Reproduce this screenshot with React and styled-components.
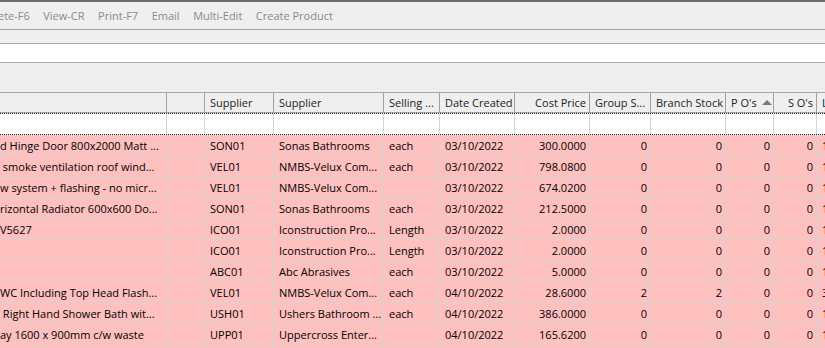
import React from "react";
import styled, { createGlobalStyle } from "styled-components";

const GlobalStyle = createGlobalStyle`
  body {
    margin: 0;
    overflow: hidden;
    font-family: "Open Sans", "Noto Sans", sans-serif;
  }
`;

const Frame = styled.div`
  width: 825px;
  height: 348px;
  overflow: hidden;
  background: #efefef;
  display: flex;
  flex-direction: column;
  font-size: 11px;
`;

const TopEdge = styled.div`
  height: 2px;
  background: #6b6b6b;
  flex: none;
`;

const Toolbar = styled.div`
  height: 27px;
  flex: none;
  display: flex;
  align-items: center;
  gap: 13.5px;
  margin-left: -2px;
  border-bottom: 1px solid #a8a8a8;
  color: #8a8a8a;
  white-space: nowrap;
`;

const ToolItem = styled.span`
  line-height: 16px;
`;

const Strip = styled.div`
  height: ${(p) => p.h}px;
  flex: none;
  background: ${(p) => (p.white ? "#ffffff" : "#efefef")};
  border-bottom: 1px solid #a8a8a8;
`;

const Grid = styled.div`
  flex: 1;
  display: flex;
  flex-direction: column;
  background: #ffffff;
`;

const Row = styled.div`
  display: flex;
  flex: none;
  height: ${(p) => p.h}px;
  background: ${(p) => p.bg};
  border-bottom: 1px ${(p) => p.line};
`;

const FilterRow = styled(Row)`
  border-top: 1px dotted #202020;
`;

const HeadCell = styled.div`
  flex: none;
  width: ${(p) => p.w}px;
  box-sizing: border-box;
  border-right: 1px solid #a0a0a0;
  padding: 0 ${(p) => (p.right ? 3 : 4)}px 0 5px;
  display: flex;
  align-items: center;
  justify-content: ${(p) => (p.right ? "flex-end" : "flex-start")};
  color: #222;
  white-space: nowrap;
  overflow: hidden;
`;

const FilterCell = styled.div`
  flex: none;
  width: ${(p) => p.w}px;
  box-sizing: border-box;
  border-right: 1px solid #d4d4d4;
`;

const Cell = styled.div`
  flex: none;
  width: ${(p) => p.w}px;
  box-sizing: border-box;
  border-right: 1px solid #d6d2d2;
  padding: 0 ${(p) => (p.right ? 3 : 4)}px 0 ${(p) => (p.first ? 0 : 5)}px;
  display: flex;
  align-items: center;
  justify-content: ${(p) => (p.right ? "flex-end" : "flex-start")};
  color: #000;
  white-space: pre;
  overflow: hidden;
`;

const SortArrow = styled.span`
  display: inline-block;
  width: 0;
  height: 0;
  margin-left: 5px;
  border-left: 5px solid transparent;
  border-right: 5px solid transparent;
  border-bottom: 5px solid #7a7a7a;
`;

const columns = [
  { w: 167, title: "" },
  { w: 38, title: "" },
  { w: 69, title: "Supplier" },
  { w: 110, title: "Supplier" },
  { w: 56, title: "Selling ..." },
  { w: 75, title: "Date Created" },
  { w: 75, title: "Cost Price", right: true },
  { w: 61, title: "Group S..." },
  { w: 75, title: "Branch Stock" },
  { w: 48, title: "P O's", sort: true },
  { w: 43, title: "S O's", right: true },
  { w: 40, title: "L" },
];

const numericCols = [6, 7, 8, 9, 10];

const rows = [
  ["d Hinge Door 800x2000 Matt ...", "", "SON01", "Sonas Bathrooms", "each", "03/10/2022", "300.0000", "0", "0", "0", "0", "1"],
  [" smoke ventilation roof wind...", "", "VEL01", "NMBS-Velux Com...", "each", "03/10/2022", "798.0800", "0", "0", "0", "0", "1"],
  ["w system + flashing - no micr...", "", "VEL01", "NMBS-Velux Com...", "", "03/10/2022", "674.0200", "0", "0", "0", "0", "1"],
  ["rizontal Radiator 600x600 Do...", "", "SON01", "Sonas Bathrooms", "each", "03/10/2022", "212.5000", "0", "0", "0", "0", "1"],
  ["V5627", "", "ICO01", "Iconstruction Pro...", "Length", "03/10/2022", "2.0000", "0", "0", "0", "0", "1"],
  ["", "", "ICO01", "Iconstruction Pro...", "Length", "03/10/2022", "2.0000", "0", "0", "0", "0", "1"],
  ["", "", "ABC01", "Abc Abrasives", "each", "03/10/2022", "5.0000", "0", "0", "0", "0", "1"],
  ["WC Including Top Head Flash...", "", "VEL01", "NMBS-Velux Com...", "each", "04/10/2022", "28.6000", "2", "2", "0", "0", "3"],
  [" Right Hand Shower Bath wit...", "", "USH01", "Ushers Bathroom ...", "each", "04/10/2022", "386.0000", "0", "0", "0", "0", "1"],
  ["ay 1600 x 900mm c/w waste", "", "UPP01", "Uppercross Enter...", "", "04/10/2022", "165.6200", "0", "0", "0", "0", "1"],
  ["", "", "", "", "", "", "", "", "", "", "", ""],
];

const tools = ["ete-F6", "View-CR", "Print-F7", "Email", "Multi-Edit", "Create Product"];

export default function App() {
  return (
    <Frame>
      <GlobalStyle />
      <TopEdge />
      <Toolbar>
        {tools.map((t) => (
          <ToolItem key={t}>{t}</ToolItem>
        ))}
      </Toolbar>
      <Strip h={13} />
      <Strip h={18} white />
      <Strip h={29} />
      <Grid>
        <Row h={19} bg="#efefef" line="solid #a0a0a0">
          {columns.map((c, i) => (
            <HeadCell key={i} w={c.w} right={c.right}>
              {c.title}
              {c.sort && <SortArrow />}
            </HeadCell>
          ))}
        </Row>
        <FilterRow h={20} bg="#ffffff" line="dotted #202020">
          {columns.map((c, i) => (
            <FilterCell key={i} w={c.w} />
          ))}
        </FilterRow>
        {rows.map((r, ri) => (
          <Row key={ri} h={20} bg="#ffc0c0" line="solid #d6d2d2">
            {r.map((v, ci) => (
              <Cell
                key={ci}
                w={columns[ci].w}
                first={ci === 0}
                right={numericCols.includes(ci)}
              >
                {v}
              </Cell>
            ))}
          </Row>
        ))}
      </Grid>
    </Frame>
  );
}
